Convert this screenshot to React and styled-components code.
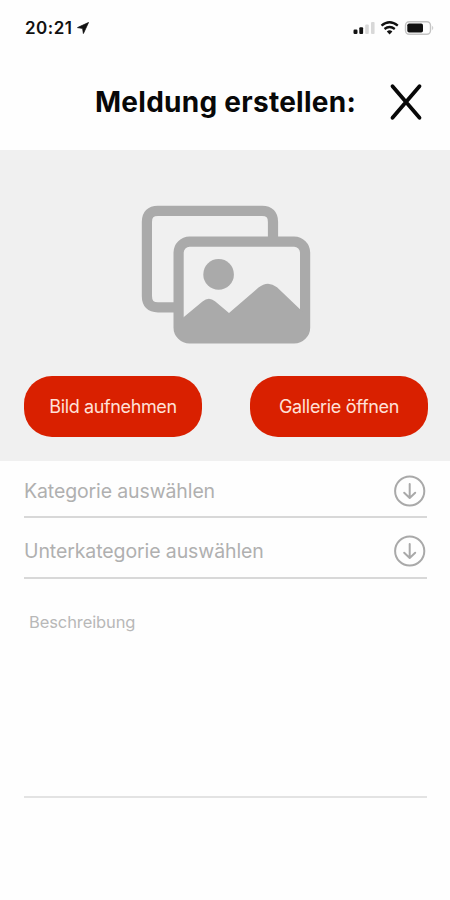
import React from 'react'
import styled, { createGlobalStyle } from "styled-components";

const GlobalStyle=createGlobalStyle`
  *{
    box-sizing:border-box;
  }
  body{
    margin:0;
    background:#fefefe;
    font-family:Inter,"Liberation Sans",sans-serif;
  }
`;

const Screen=styled.div`
  display:flex;
  flex-direction:column;
  width:450px;
  height:900px;
  overflow:hidden;
`;

const StatusBar=styled.div`
  display:flex;
  justify-content:space-between;
  align-items:center;
  height:56px;
  padding:0 16px 0 25px;
`;

const Clock=styled.div`
  display:flex;
  align-items:center;
  gap:4px;
  font-size:17px;
  font-weight:600;
  letter-spacing:${(p)=>p.$spacing};
  color:#111;
`;

const StatusIcons=styled.div`
  display:flex;
  align-items:center;
`;

const Header=styled.header`
  display:flex;
  align-items:center;
  justify-content:space-between;
  height:94px;
  padding:0 26px 2px 95px;
`;

const Title=styled.h1`
  margin:0;
  font-size:28px;
  line-height:36px;
  font-weight:700;
  letter-spacing:${(p)=>p.$spacing};
  white-space:nowrap;
  color:#080808;
`;

const IconButton=styled.button`
  display:flex;
  padding:0;
  border:0;
  background:none;
`;

const Upload=styled.section`
  display:flex;
  flex-direction:column;
  align-items:center;
  height:311px;
  padding:55px 22px 0 24px;
  background:#f0f0f0;
`;

const Buttons=styled.div`
  display:flex;
  justify-content:space-between;
  width:100%;
  margin-top:31px;
`;

const Button=styled.button`
  width:178px;
  height:61px;
  padding:0;
  border:0;
  border-radius:28px;
  background:#d92000;
  color:#ffe0d8;
  font-family:inherit;
  font-size:18px;
  font-weight:400;
  letter-spacing:${(p)=>p.$spacing};
`;

const Form=styled.div`
  display:flex;
  flex-direction:column;
  padding:0 23px 0 24px;
`;

const Select=styled.div`
  display:flex;
  align-items:center;
  justify-content:space-between;
  height:${(p)=>p.$height};
  padding:${(p)=>p.$top} 1px 0 0;
  border-bottom:2px solid #d8d8d8;
  color:#b0b0b0;
  font-size:19.5px;
  letter-spacing:${(p)=>p.$spacing};
`;

const Description=styled.div`
  height:219px;
  padding:32px 5px 0;
  border-bottom:2px solid #e3e3e3;
  color:#b8b8b8;
  font-size:16.5px;
  line-height:22px;
  letter-spacing:${(p)=>p.$spacing};
`;

const LocationArrow=()=>(
  <svg width="12" height="12" viewBox="0 0 12 12">
    <path d="M11.5 0.5L0.5 5.6L5.6 6.4L6.4 11.5Z" fill="#111" stroke="#111" strokeWidth="0.8" strokeLinejoin="round" />
  </svg>
)

const PhoneStatus=()=>(
  <svg width="81" height="18" viewBox="353 19 81 18">
    <rect x="353.5" y="29.5" width="4" height="4.5" rx="1.2" fill="#111" />
    <rect x="359.3" y="27.3" width="3.8" height="6.7" rx="1" fill="#111" />
    <rect x="365.2" y="24.5" width="3.6" height="9.5" rx="1" fill="#d8d8d8" />
    <rect x="371" y="22" width="3.6" height="12" rx="1" fill="#d8d8d8" />
    <g fill="none" stroke="#111" strokeWidth="2.3">
      <path d="M381.5 25.7Q389.5 18.9 397.8 25.7" />
      <path d="M384.5 29Q389.5 25 394.8 29" />
    </g>
    <path d="M386.8 31.4Q389.6 29.2 392.4 31.4L389.6 34.4Z" fill="#111" />
    <rect x="405.5" y="21.8" width="25" height="12.4" rx="3.6" fill="none" stroke="#c4c4c4" strokeWidth="1.4" />
    <rect x="407.3" y="23.5" width="15.7" height="9" rx="1.8" fill="#111" />
    <path d="M432.2 25.8Q434.3 28 432.2 30.2Z" fill="#c4c4c4" />
  </svg>
)

const CloseIcon=()=>(
  <svg width="36" height="40" viewBox="0 0 36 40">
    <path d="M4.5 4.3L31.5 35.7M31.5 4.3L4.5 35.7" stroke="#080808" strokeWidth="3.8" strokeLinecap="round" />
  </svg>
)

const GalleryIcon=()=>(
  <svg width="170" height="140" viewBox="141 205 170 140">
    <g fill="none" stroke="#aaa" strokeWidth="10.2">
      <path d="M178 307.4H158Q146.9 307.4 146.9 296V222Q146.9 210.9 158 210.9H262Q273 210.9 273 222V240" />
      <rect x="178.6" y="241.6" width="126.5" height="96.8" rx="11" />
    </g>
    <circle cx="218.6" cy="274.4" r="15.3" fill="#aaa" />
    <path d="M179 321L202.5 301.5Q208.8 296 215 301.2L229 313L258.5 287.5Q268 280 277 287.3L305 314V338H179Z" fill="#aaa" />
  </svg>
)

const DownIcon=()=>(
  <svg width="32" height="32" viewBox="0 0 32 32" fill="none" stroke="#a9a9a9" strokeWidth="2" strokeLinecap="round" strokeLinejoin="round">
    <circle cx="15.7" cy="16" r="14.6" />
    <path d="M15.7 9V22.7M10.2 17.7L15.7 23L21.2 17.7" />
  </svg>
)

const App = () => {

  return (
    <>
    <GlobalStyle />
    <Screen>
      <StatusBar>
        <Clock $spacing="0.5px">20:21<LocationArrow /></Clock>
        <StatusIcons><PhoneStatus /></StatusIcons>
      </StatusBar>

      <Header>
        <Title $spacing="0.27px">Meldung erstellen:</Title>
        <IconButton aria-label="Schließen"><CloseIcon /></IconButton>
      </Header>

      <Upload>
        <GalleryIcon />
        <Buttons>
          <Button $spacing="-0.38px">Bild aufnehmen</Button>
          <Button $spacing="-0.32px">Gallerie öffnen</Button>
        </Buttons>
      </Upload>

      <Form>
        <Select $height="57px" $top="5px" $spacing="-0.12px">Kategorie auswählen<DownIcon /></Select>
        <Select $height="61px" $top="7px" $spacing="-0.1px">Unterkategorie auswählen<DownIcon /></Select>
        <Description $spacing="-0.1px">Beschreibung</Description>
      </Form>
    </Screen>
    </>
  )
}

export default App
